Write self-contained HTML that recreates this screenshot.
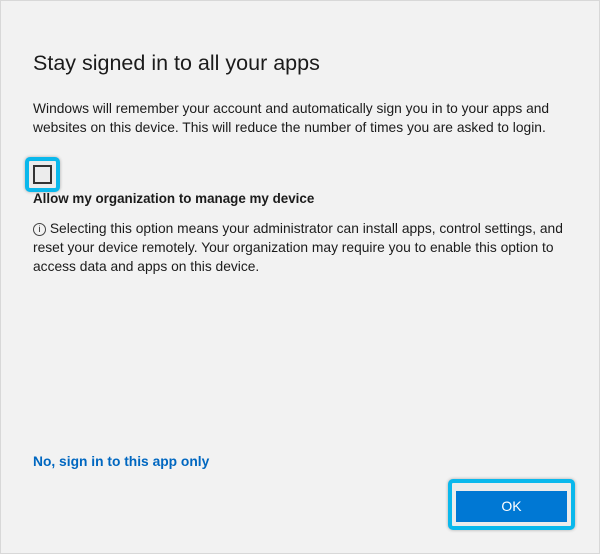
<html><head><style>
body{margin:0;width:600px;height:554px;background:#f2f2f2;font-family:"Liberation Sans",sans-serif;position:relative;overflow:hidden;color:#1a1a1a}
.b{position:absolute;left:0;top:0;width:598px;height:552px;border:1px solid #d8d8d8}
h1{position:absolute;left:33px;top:51px;margin:0;font-weight:normal;font-size:21.5px;color:#1b1b1b}
.p{position:absolute;left:33px;font-size:13.8px;line-height:19px;color:#1b1b1b}
.hl{position:absolute;border:4px solid #0ab8ec;border-radius:5px;box-shadow:0 0 3px rgba(0,0,0,.3);background:#ececec}
</style></head><body><div class="b"></div>
<h1>Stay signed in to all your apps</h1>
<div class="p" style="top:99px;width:550px">Windows will remember your account and automatically sign you in to your apps and websites on this device. This will reduce the number of times you are asked to login.</div>
<div class="hl" style="left:25px;top:157px;width:27px;height:27px"></div>
<div style="position:absolute;left:33px;top:165px;width:15px;height:15px;border:2px solid #333"></div>
<div class="p" style="top:189px;font-weight:bold;font-size:13.4px">Allow my organization to manage my device</div>
<div class="p" style="top:219px;width:540px"><span style="display:inline-block;width:11px;height:11px;border:1px solid #444;border-radius:50%;font-size:9px;line-height:11px;text-align:center;vertical-align:1px">i</span> Selecting this option means your administrator can install apps, control settings, and reset your device remotely. Your organization may require you to enable this option to access data and apps on this device.</div>
<div class="p" style="top:452px;font-weight:bold;color:#0067c0">No, sign in to this app only</div>
<div class="hl" style="left:448px;top:479px;width:119px;height:43px"></div>
<div style="position:absolute;left:456px;top:491px;width:111px;height:31px;background:#0078d4;color:#fff;font-size:14px;text-align:center;line-height:31px">OK</div>
</body></html>
